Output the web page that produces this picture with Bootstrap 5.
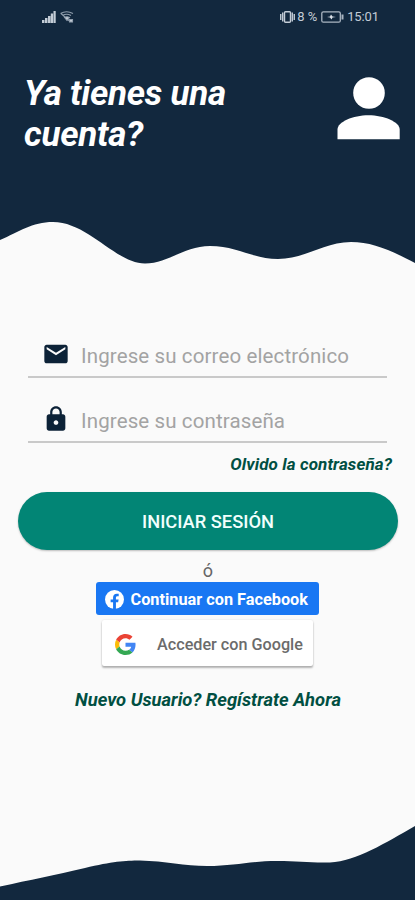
<!DOCTYPE html>
<html lang="es">
<head>
<meta charset="utf-8">
<meta name="viewport" content="width=device-width, initial-scale=1">
<title>Iniciar sesión</title>
<link href="https://cdn.jsdelivr.net/npm/bootstrap@5.3.0/dist/css/bootstrap.min.css" rel="stylesheet">
<style>
:root{--navy:#12283e;--paper:#fafafa;--green:#014f42}
body{background:var(--paper);font-family:Roboto,"Liberation Sans",sans-serif}
svg{display:block;flex:none}
.screen{height:900px}
.hero{background:var(--navy);height:200px}
.status{height:34px;padding:0 36px 0 42px;color:#c3ccd6;font-size:13px;line-height:34px}
.battery-label{margin-left:2px;letter-spacing:-.1px}
.clock{letter-spacing:-.1px;margin-left:3px}
.hero-row{padding:39px 15px 0 24px}
.hero-title{font-size:35px;line-height:41px;letter-spacing:-.25px;font-weight:700;font-style:italic;color:#fff;width:250px}
.login-form{padding:69px 28px 0}
.field{height:39px;border-bottom:2px solid #c9c9c9;padding:0 0 7px 14px}
.field + .field{margin-top:26px}
.field .form-control{font-size:20.5px;letter-spacing:.12px;height:34px;line-height:34px;color:#333;margin:3px 0 0 11px}
.field .form-control::placeholder{color:#a3a3a3;opacity:1}
.field .form-control:focus{box-shadow:none}
.green-link{color:var(--green);font-weight:700;font-style:italic;white-space:nowrap}
.forgot{font-size:17px;letter-spacing:.1px;line-height:20px;padding:11px 23px 0 0}
.btn-login{--bs-btn-bg:#028575;--bs-btn-color:#f2fffd;--bs-btn-hover-bg:#027365;--bs-btn-hover-color:#fff;height:58px;margin:18px 17px 0 18px;padding-top:8px;font-size:18.3px;font-weight:500;border:0;box-shadow:0 1px 2px rgba(0,0,0,.25)}
.or{font-size:18px;line-height:22px;color:#666;padding-left:1px;margin-top:10px}
.btn-fb{--bs-btn-bg:#1977f3;--bs-btn-color:#fff;--bs-btn-hover-bg:#1467d6;--bs-btn-hover-color:#fff;width:223px;height:33px;border:0;border-radius:3px;font-size:16.3px;font-weight:700;padding:1px 0 0 9px}
.btn-fb svg{margin-right:6.5px}
.btn-fb span{padding-top:2px}
.btn-gg{--bs-btn-bg:#fff;--bs-btn-color:#6b6b6b;--bs-btn-hover-bg:#f6f6f6;--bs-btn-hover-color:#555;width:211px;height:46px;margin-top:5px;border:0;border-radius:2px;font-size:16.2px;font-weight:500;padding:2px 0 0 13px;box-shadow:0 2px 2px rgba(0,0,0,.28),0 0 2px rgba(0,0,0,.12)}
.google-label{margin-left:21px;padding-top:2px}
.signup{font-size:18.4px;line-height:22px;margin-top:23px;padding-left:1px}
</style>
</head>
<body>
<main class="screen d-flex flex-column overflow-hidden">
  <header class="hero flex-shrink-0">
    <div class="status d-flex align-items-center justify-content-between">
      <div class="d-flex gap-1">
        <svg width="14" height="12" viewBox="0 0 14 12" fill="#c3ccd6"><path d="M0 9h2.500v3H0zM3 7h2.500v5H3zM6 5h2.500v7H6zM8.800 2.500h2.300V12H8.800zM11.500 0h2.200v12h-2.200z"/></svg>
        <svg width="14" height="12" viewBox="0 0 14 12" fill="none" stroke="#8f9dac" stroke-width="1.100"><path d="M.5 2.500Q6.500-1 13 2.500M2.500 4.500Q6.500 2 11 4.500M1 2.500l9 8"/><path d="M4.500 6.500q2.500-1.500 5 0L7 9.500zM9.500 8.500l3 0v2.500h-3z" fill="#c3ccd6"/></svg>
      </div>
      <div class="d-flex align-items-center">
        <svg width="15" height="12" viewBox="0 0 16 12" preserveAspectRatio="none" fill="none" stroke="#c3ccd6" stroke-width="1.500"><rect x="4.800" y=".8" width="6.400" height="10.400" rx="1"/><path d="M.8 3v6M2.900 1.500v9M13.100 1.500v9M15.200 3v6"/></svg>
        <span class="battery-label">8 %</span>
        <svg class="ms-1" width="23" height="12" viewBox="0 0 23 12" fill="none" stroke="#aab5c1" stroke-width="1.300"><rect x=".8" y=".8" width="18.500" height="10.400" rx="1.500"/><path d="M21.500 3.500v5" stroke-width="2"/><path d="M6 6l3-.6 1-2 1.500 2L15 6l-3.500.6-1 2-1.500-2z" fill="#dde3ea" stroke="none"/></svg>
        <span class="clock">15:01</span>
      </div>
    </div>
    <div class="hero-row d-flex justify-content-between">
      <h1 class="hero-title mb-0">Ya tienes una cuenta?</h1>
      <svg width="63" height="67" viewBox="0 0 63 67" fill="#fff"><circle cx="32" cy="20" r="15.800"/><path d="M.5 66.300V56.500C.5 49 16 42.300 31.500 42.300S62.700 49 62.700 56.500v9.800z"/></svg>
    </div>
  </header>
  <svg class="w-100" height="70" viewBox="0 0 415 70" preserveAspectRatio="none"><path d="M0 0H415V63C390 50 372 42 351 42C324 42 305 59 278 59C253 59 237 46 210 46C184 46 168 63.500 145 63.500C116 63.500 88 22 53 22C32 22 19 32 0 40Z" fill="#12283e"/></svg>

  <form class="flex-grow-1 d-flex flex-column">
    <div class="login-form">
      <div class="field d-flex align-items-center">
        <svg width="28" height="28" viewBox="0 0 24 24" fill="#0c2237"><path d="M20 4H4c-1.100 0-2 .9-2 2v12c0 1.100.9 2 2 2h16c1.100 0 2-.9 2-2V6c0-1.100-.9-2-2-2zm0 4l-8 5-8-5V6l8 5 8-5z"/></svg>
        <input class="form-control border-0 bg-transparent p-0" type="email" placeholder="Ingrese su correo electrónico">
      </div>
      <div class="field d-flex align-items-center">
        <svg width="28" height="28" viewBox="0 0 24 24" fill="#0c2237"><path d="M18 8h-1V6c0-2.760-2.240-5-5-5S7 3.240 7 6v2H6c-1.100 0-2 .9-2 2v10c0 1.100.9 2 2 2h12c1.100 0 2-.9 2-2V10c0-1.100-.9-2-2-2zm-6 9c-1.100 0-2-.9-2-2s.9-2 2-2 2 .9 2 2-.9 2-2 2zm3.100-9H8.900V6c0-1.710 1.390-3.100 3.100-3.100s3.100 1.390 3.100 3.100z"/></svg>
        <input class="form-control border-0 bg-transparent p-0" type="password" placeholder="Ingrese su contraseña">
      </div>
    </div>
    <a class="green-link forgot text-decoration-none align-self-end" href="#">Olvido la contraseña?</a>
    <button class="btn btn-login rounded-pill" type="button">INICIAR SESIÓN</button>
    <div class="or text-center">ó</div>
    <button class="btn btn-fb d-flex align-items-center align-self-center text-nowrap" type="button">
      <svg width="19" height="19" viewBox="0 0 24 24"><circle cx="12" cy="12" r="12" fill="#fff"/><path d="M10.200 24v-8.500H7.100V12h3.100V9.300c0-3 1.800-4.700 4.600-4.700 1.300 0 2.500.2 2.500.2v3h-1.500c-1.500 0-2 .9-2 1.900V12h3.400l-.6 3.500h-2.800V24z" fill="#1977f3"/></svg>
      <span>Continuar con Facebook</span>
    </button>
    <button class="btn btn-gg d-flex align-items-center align-self-center text-nowrap" type="button">
      <svg width="21" height="21" viewBox="0 0 48 48"><path fill="#ea4335" d="M24 9.500c3.540 0 6.710 1.220 9.210 3.600l6.850-6.850C35.900 2.380 30.470 0 24 0 14.620 0 6.510 5.380 2.560 13.220l7.980 6.190C12.430 13.720 17.740 9.500 24 9.500z"/><path fill="#4285f4" d="M46.980 24.550c0-1.570-.15-3.090-.38-4.550H24v9.020h12.940c-.58 2.960-2.260 5.480-4.780 7.180l7.730 6c4.510-4.180 7.090-10.360 7.090-17.650z"/><path fill="#fbbc05" d="M10.530 28.590c-.48-1.450-.76-2.990-.76-4.590s.27-3.140.76-4.590l-7.980-6.190C.92 16.460 0 20.120 0 24c0 3.880.92 7.540 2.560 10.780z"/><path fill="#34a853" d="M24 48c6.480 0 11.930-2.130 15.890-5.810l-7.730-6c-2.150 1.450-4.920 2.300-8.160 2.300-6.260 0-11.570-4.220-13.470-9.910l-7.980 6.190C6.510 42.620 14.620 48 24 48z"/></svg>
      <span class="google-label">Acceder con Google</span>
    </button>
    <a class="green-link signup text-decoration-none align-self-center" href="#">Nuevo Usuario? Regístrate Ahora</a>
  </form>
  <svg class="w-100" height="75" viewBox="0 0 415 75" preserveAspectRatio="none"><path d="M0 61.500C30 55 55 50 85 43C112 36.500 125 35.500 140 35.500C165 36 185 41 207 41C235 41 250 36 277 36C298 36 310 38 330 37.500C357 36 385 18 415 1V75H0Z" fill="#12283e"/></svg>
</main>
<script src="https://cdn.jsdelivr.net/npm/bootstrap@5.3.0/dist/js/bootstrap.bundle.min.js"></script>
</body>
</html>
